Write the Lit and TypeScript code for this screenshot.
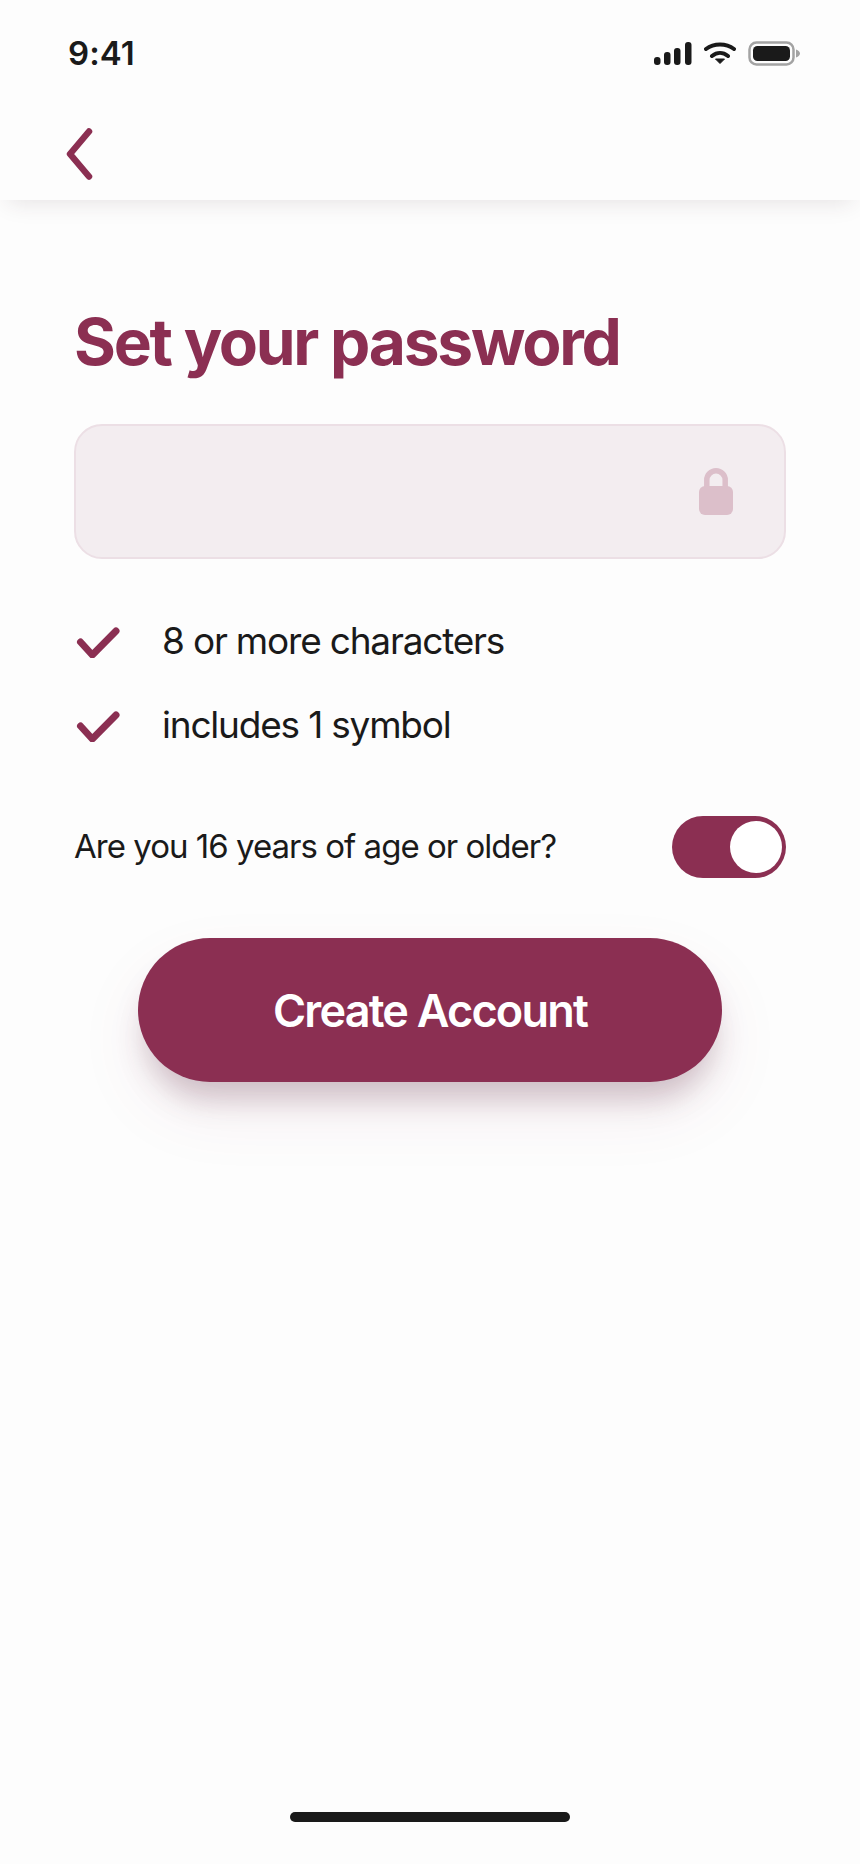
import { html, css, LitElement } from 'lit'
import { customElement, state } from 'lit/decorators.js'

const RULES = ['8 or more characters', 'includes 1 symbol']

@customElement('app-root')
export class AppRoot extends LitElement {
  static styles = css`
    :host {
      display: block;
      --wine: #8b2f52;
      --ink: #1a1a1a;
      font-family: Inter, 'Liberation Sans', sans-serif;
      color: var(--ink);
    }
    .page {
      width: 860px;
      height: 1864px;
      background: #fdfdfd;
      display: flex;
      flex-direction: column;
      overflow: hidden;
    }
    .top {
      height: 200px;
      flex: none;
      background: #fdfdfd;
      box-shadow: 0 10px 22px -8px rgba(60, 40, 50, 0.13);
      display: flex;
      flex-direction: column;
    }
    .status {
      height: 100px;
      padding: 0 60px 0 68px;
      display: flex;
      align-items: center;
      justify-content: space-between;
      box-sizing: border-box;
    }
    .time {
      font-size: 33px;
      font-weight: 600;
      line-height: 1;
      margin-top: 7px;
      letter-spacing: 0.1px;
    }
    .status-icons {
      display: flex;
      align-items: center;
      gap: 12px;
      margin-top: 7px;
    }
    .nav {
      flex: 1;
      padding: 7px 0 0 65px;
      display: flex;
      align-items: center;
    }
    main {
      padding: 110px 74px 0;
      display: flex;
      flex-direction: column;
    }
    h1 {
      margin: 0;
      font-size: 64px;
      font-weight: 700;
      line-height: 64px;
      color: var(--wine);
      letter-spacing: -2.25px;
    }
    .field {
      margin-top: 50px;
      height: 135px;
      box-sizing: border-box;
      background: #f3edf0;
      border: 2px solid #ecdfe5;
      border-radius: 28px;
      display: flex;
      align-items: center;
      justify-content: flex-end;
      padding: 0 51px 0 0;
    }
    .rules {
      list-style: none;
      margin: 58px 0 0;
      padding: 0;
      display: flex;
      flex-direction: column;
      gap: 36px;
    }
    .rules li {
      display: flex;
      align-items: center;
      gap: 42px;
      font-size: 37px;
      line-height: 48px;
      padding-left: 2px;
      letter-spacing: -1.2px;
    }
    .rules svg { flex: none; }
    .age {
      margin-top: 67px;
      display: flex;
      align-items: center;
      justify-content: space-between;
      font-size: 33px;
      line-height: 60px;
      letter-spacing: -0.98px;
    }
    .toggle {
      width: 114px;
      height: 62px;
      padding: 5px 4px;
      box-sizing: border-box;
      border: none;
      border-radius: 31px;
      background: var(--wine);
      display: flex;
      justify-content: flex-end;
      cursor: pointer;
    }
    .toggle.off { justify-content: flex-start; background: #d9c8d0; }
    .knob {
      width: 52px;
      height: 52px;
      border-radius: 50%;
      background: #fff;
    }
    .age span:first-child { margin-bottom: 2px; }
    .create {
      align-self: center;
      margin-top: 60px;
      width: 584px;
      height: 144px;
      border: none;
      border-radius: 72px;
      background: var(--wine);
      color: #fff;
      font-family: inherit;
      font-size: 45px;
      font-weight: 600;
      letter-spacing: -1.8px;
      box-shadow: 0 24px 30px -8px rgba(90, 40, 60, 0.26), 0 30px 70px rgba(139, 47, 82, 0.07);
      cursor: pointer;
    }
    .home {
      margin: auto auto 42px;
      width: 280px;
      height: 10px;
      border-radius: 5px;
      background: var(--ink);
    }
  `

  @state()
  private adult = true;

  render() {
    return html`
      <div class="page">
        <header class="top">
          <div class="status">
            <span class="time">9:41</span>
            <span class="status-icons">
              <svg width="38" height="23" viewBox="0 0 38 23" fill="#1a1a1a">
                <rect x="0" y="15" width="6.500" height="8" rx="3"/>
                <rect x="10" y="10" width="6.500" height="13" rx="3"/>
                <rect x="20" y="6" width="6.500" height="17" rx="3"/>
                <rect x="31" y="0" width="6.500" height="23" rx="3"/>
              </svg>
              <svg width="32" height="23" viewBox="0 0 32 23">
                <path d="M2 7C10 1 22 1 30 7M8 14C13 10 19 10 24 14" fill="none" stroke="#1a1a1a" stroke-width="4" stroke-linecap="round"/>
                <path d="M11.500 17H20.500L16 21.500Z" fill="#1a1a1a" stroke="#1a1a1a" stroke-linejoin="round"/>
              </svg>
              <svg width="52" height="25" viewBox="0 0 52 25">
                <rect x="1.500" y="1.500" width="44" height="22" rx="7" fill="none" stroke="#a3a3a3" stroke-width="2.500"/>
                <rect x="5" y="5" width="37" height="15" rx="4.500" fill="#1a1a1a"/>
                <path d="M48 8.500C50.500 9.500 52 11 52 12.500S50.500 15.500 48 16.500Z" fill="#a3a3a3"/>
              </svg>
            </span>
          </div>
          <div class="nav">
            <svg width="30" height="54" viewBox="0 0 30 54" fill="none" stroke="#8b2f52" stroke-width="6.500" stroke-linecap="round" stroke-linejoin="round">
              <path d="M24 4.500L5 27L24 49.500"/>
            </svg>
          </div>
        </header>
        <main>
          <h1>Set your password</h1>
          <div class="field">
            <svg width="34" height="47" viewBox="0 0 34 47" fill="#dcbfca">
              <path d="M7.800 20V12a9.200 9.200 0 0 1 18.400 0V20" fill="none" stroke="#dcbfca" stroke-width="5.500"/>
              <rect x="0" y="18" width="34" height="29" rx="6"/>
            </svg>
          </div>
          <ul class="rules">
            ${RULES.map(r => html`
              <li>
                <svg width="44" height="34" viewBox="0 0 44 34" fill="none" stroke="#8b2f52" stroke-width="7" stroke-linecap="round" stroke-linejoin="round">
                  <path d="M4.500 18L16.300 31L40 7"/>
                </svg>
                ${r}
              </li>
            `)}
          </ul>
          <div class="age">
            <span>Are you 16 years of age or older?</span>
            <button class="toggle ${this.adult ? '' : 'off'}" @click=${() => { this.adult = !this.adult }} aria-label="Are you 16 years of age or older?">
              <span class="knob"></span>
            </button>
          </div>
          <button class="create">Create Account</button>
        </main>
        <div class="home"></div>
      </div>
    `
  }
}

declare global {
  interface HTMLElementTagNameMap {
    'app-root': AppRoot
  }
}
